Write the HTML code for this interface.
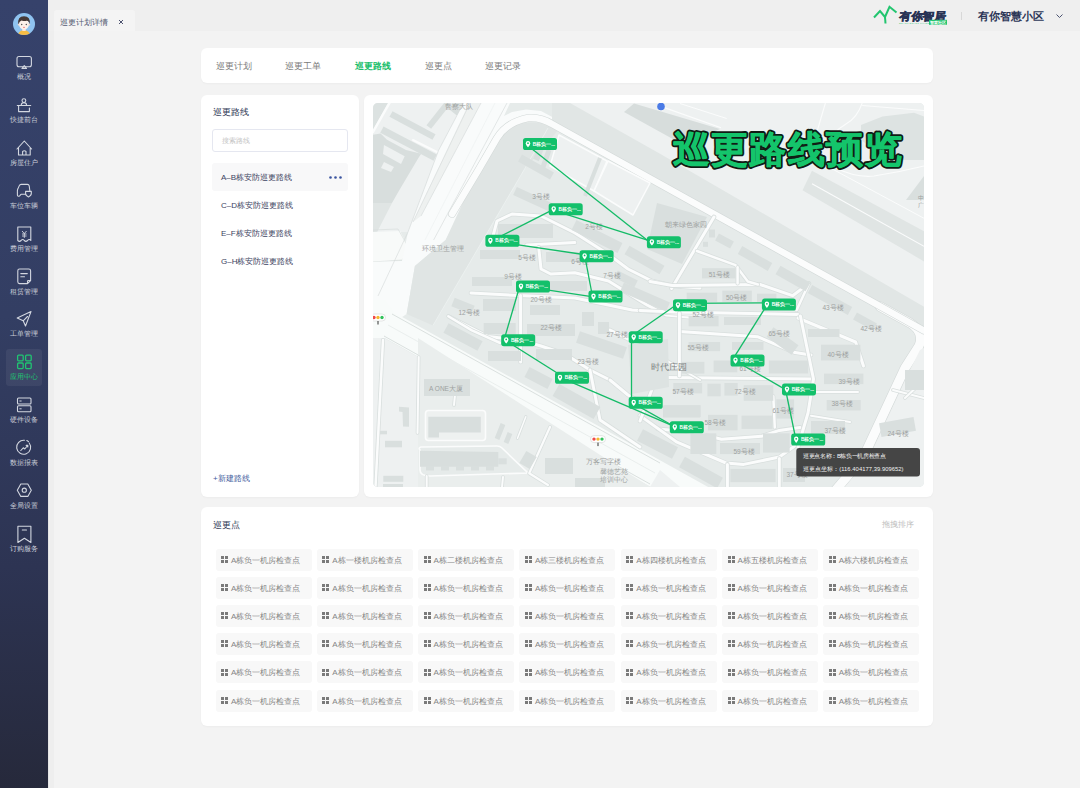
<!DOCTYPE html>
<html><head><meta charset="utf-8">
<style>
*{margin:0;padding:0;box-sizing:border-box}
html,body{width:1080px;height:788px;overflow:hidden}
body{position:relative;background:#f3f3f3;font-family:"Liberation Sans",sans-serif;color:#2c3452}
.a{position:absolute}
.t{position:absolute;white-space:nowrap;line-height:1}
#side{left:0;top:0;width:48px;height:788px;background:linear-gradient(#36426b,#333e63 40%,#2d3453 72%,#26293b)}
#sideshadow{left:48px;top:0;width:6px;height:788px;background:linear-gradient(90deg,#dcdcdc 0,#f2f2f2 1.2px,#eeeeee 2px,#eeeeee 6px)}
.sl{position:absolute;left:0;width:48px;text-align:center;font-size:7px;line-height:8px;color:#c9cdd8}
.ic{position:absolute;left:0;width:48px;height:788px;top:0}
#hdr{left:48px;top:0;width:1032px;height:31px;background:#efefef}
.card{position:absolute;background:#fff;border-radius:6px;box-shadow:0 1px 2px rgba(0,0,0,.03)}
.tab{position:absolute;top:62px;font-size:9px;line-height:9px;color:#7a7a7a}
.li{position:absolute;left:221px;font-size:8px;line-height:8px;color:#3b4260}
.chip{position:absolute;width:96px;height:22px;background:#f8f8f8;border-radius:3px}
.chip i{position:absolute;left:5.5px;top:7.2px;width:7px;height:7px}
.chip i b{position:absolute;width:3px;height:3px;background:#7a7a7a}
.chip span{position:absolute;left:15.5px;top:8px;font-size:8px;line-height:8px;color:#858585;white-space:nowrap}
</style></head><body>

<div id="side" class="a"></div>
<div id="sideshadow" class="a"></div>
<svg class="a" style="left:0;top:0" width="48" height="788" viewBox="0 0 48 788">
<defs><clipPath id="avc"><circle cx="24" cy="24" r="11"/></clipPath></defs>
<circle cx="24" cy="24" r="11" fill="#8fc3f0"/>
<g clip-path="url(#avc)">
<path d="M17.5,37 Q18,30.5 24,30 Q30,30.5 30.5,37 Z" fill="#f7bd45"/>
<rect x="22.3" y="27" width="3.4" height="4" fill="#fbe6da"/>
<ellipse cx="24" cy="24.3" rx="5" ry="5.2" fill="#fdf0ea"/>
<circle cx="18.8" cy="24.6" r="1" fill="#fae3d8"/><circle cx="29.2" cy="24.6" r="1" fill="#fae3d8"/>
<path d="M18.2,24.5 Q17.3,16.3 24,16.3 Q30.7,16.3 29.8,24.5 Q29,20.5 26.5,20.8 Q24.5,21.5 21.5,20.5 Q19.5,21 18.2,24.5 Z" fill="#463936"/>
<circle cx="21.7" cy="24.6" r=".75" fill="#555"/><circle cx="26.3" cy="24.6" r=".75" fill="#555"/>
<ellipse cx="24" cy="27.3" rx="1" ry=".55" fill="#ef6a6a"/>
</g>
<g fill="none" stroke="#d3d7e0" stroke-width="1.1" stroke-linejoin="round" stroke-linecap="round">
<rect x="17" y="56.5" width="14.4" height="10.2" rx="2"/>
<path d="M22,68.4 L26.5,68.4 M22.6,67.6 L24.3,65.6 L26,67.6"/>
<circle cx="23.9" cy="100.6" r="1.9"/>
<path d="M21.2,105 Q21.5,102.6 23.9,102.6 Q26.3,102.6 26.6,105 M17.3,105.5 L30.7,105.5 M18.6,106 L18.6,111.6 L29.4,111.6 L29.4,108"/>
<path d="M17,149 L24.3,141 L31.6,149 M18.5,147.5 L18.5,155 L30.2,155 L30.2,147.5 M22.6,155 L22.6,151.5 Q24.3,150 26,151.5 L26,155"/>
<path d="M25.6,194.3 L21,194.3 L19.6,195.8 Q19.2,196.2 18.4,196.2 Q17.4,196.2 17.4,195 L17.4,191 Q17.4,189.8 18,188.6 L19.3,185.6 Q19.8,184.4 21.2,184.4 L27.5,184.4 Q28.8,184.4 29.2,185.8 L29.9,191.2"/>
<path d="M25.6,191.4 L31.3,191.4 L31.3,193.6 Q31.3,195.8 28.45,196.9 Q25.6,195.8 25.6,193.6 Z"/>
<path d="M17.8,227 L30.8,227 L30.8,240.5 Q29.2,238.6 27.5,240.5 Q25.9,242.2 24.3,240.5 Q22.7,238.6 21.1,240.5 Q19.5,242.2 17.8,240.5 Z"/>
<path d="M22.3,231.3 L24.3,233.5 L26.3,231.3 M22.4,234 L26.2,234 M22.4,236 L26.2,236 M24.3,233.5 L24.3,237.5" stroke-width=".9"/>
<path d="M27.5,283.6 L19.5,283.6 Q17.8,283.6 17.8,281.8 L17.8,270.8 Q17.8,269 19.5,269 L28.8,269 Q30.6,269 30.6,270.8 L30.6,280.5 Z M30.6,280.5 L28.3,280.5 Q27.5,280.5 27.5,281.3 L27.5,283.6"/>
<path d="M20.8,273.6 L27.3,273.6 M20.8,276.8 L24.5,276.8"/>
<path d="M17.2,318 L31,311.6 L25.5,326 L23.2,320.8 Z M23.2,320.8 L27.5,316.5"/>
</g>
<rect x="6" y="349" width="36" height="37" rx="3" fill="#ffffff" fill-opacity=".06"/>
<g fill="none" stroke="#20c572" stroke-width="1.3">
<rect x="17.6" y="355.2" width="5.6" height="5.6" rx="1"/><rect x="25.6" y="355.2" width="5.6" height="5.6" rx="1"/>
<rect x="17.6" y="363" width="5.6" height="5.6" rx="1"/><rect x="25.6" y="363" width="5.6" height="5.6" rx="1"/>
</g>
<g fill="none" stroke="#d3d7e0" stroke-width="1.1" stroke-linejoin="round" stroke-linecap="round">
<rect x="17.5" y="398" width="13.5" height="6" rx="1"/><rect x="17.5" y="405.8" width="13.5" height="6" rx="1"/>
<path d="M19.8,401 L21.2,401 M19.8,408.8 L21.2,408.8" stroke-width="1"/>
<path d="M29.2,443 A7,7 0 1 1 24.5,440.3"/>
<path d="M26.8,440.6 A7,7 0 0 1 28.5,441.6" />
<path d="M20.8,450.5 L23.3,447.8 L24.8,449 L27.6,445.5 M26.2,445.4 L27.8,445.3 L27.8,446.9"/>
<path d="M20.8,484 L27.8,484 L31.3,490.2 L27.8,496.4 L20.8,496.4 L17.3,490.2 Z"/>
<circle cx="24.3" cy="490.2" r="2.1"/>
<path d="M17.9,526.2 L30.9,526.2 L30.9,542.5 L24.4,538.2 L17.9,542.5 Z M22.3,530 L26.5,530"/>
</g>
</svg>
<div class="sl" style="top:73px">概况</div>
<div class="sl" style="top:116px">快捷前台</div>
<div class="sl" style="top:159px">房屋住户</div>
<div class="sl" style="top:202px">车位车辆</div>
<div class="sl" style="top:244.5px">费用管理</div>
<div class="sl" style="top:287.5px">租赁管理</div>
<div class="sl" style="top:330px">工单管理</div>
<div class="sl" style="top:373px;color:#20c572">应用中心</div>
<div class="sl" style="top:416px">硬件设备</div>
<div class="sl" style="top:459px">数据报表</div>
<div class="sl" style="top:501.5px">全局设置</div>
<div class="sl" style="top:544.5px">订购服务</div>


<div id="hdr" class="a"></div>
<div class="a" style="left:54px;top:10px;width:81px;height:21px;background:#f4f4f4;border-radius:3px 3px 0 0"></div>
<div class="t" style="left:60px;top:18.5px;font-size:8px;color:#535a72">巡更计划详情</div>
<svg class="a" style="left:117.5px;top:19px" width="6" height="6"><path d="M1,1 L5,5 M5,1 L1,5" stroke="#3a4060" stroke-width=".9"/></svg>
<svg class="a" style="left:870px;top:4px" width="80" height="24" viewBox="870 4 80 24">
<path d="M874,17.5 L880,11 L885,17 L889.5,6.8 L896.5,12.5" fill="none" stroke="#22c56f" stroke-width="2" stroke-linejoin="miter"/>
<path d="M885,17 L885.5,23.5" fill="none" stroke="#22c56f" stroke-width="2"/>
<text x="0" y="0" font-size="10.9" font-weight="900" fill="#283355" stroke="#283355" stroke-width=".55" transform="translate(899,19.9) skewX(-7)" textLength="46.5" lengthAdjust="spacingAndGlyphs">有你智居</text>
<rect x="929" y="19.8" width="18" height="5" fill="#22c56f"/>
<text x="938" y="22.5" font-size="3.6" font-weight="bold" fill="#fff" text-anchor="middle" dominant-baseline="central">智慧社区</text>
<text x="899" y="22.5" font-size="2.2" fill="#22c56f" dominant-baseline="central" letter-spacing=".4">SMART SMART LIVING</text>
</svg>
<div class="a" style="left:961px;top:12px;width:1px;height:8px;background:#d8d8d8"></div>
<div class="t" style="left:977.5px;top:10.5px;font-size:11px;font-weight:bold;color:#2c3657">有你智慧小区</div>
<svg class="a" style="left:1055px;top:13px" width="9" height="6"><path d="M1.5,1.5 L4.5,4.5 L7.5,1.5" fill="none" stroke="#4a5270" stroke-width="1"/></svg>


<!-- cards -->
<div class="card" style="left:201px;top:48px;width:732px;height:35px"></div>
<div class="card" style="left:201px;top:94.5px;width:158px;height:402px"></div>
<div class="card" style="left:364px;top:94.5px;width:569px;height:402px"></div>
<div class="card" style="left:201px;top:506.5px;width:732px;height:219.5px"></div>

<div class="tab" style="left:215.5px">巡更计划</div>
<div class="tab" style="left:285px">巡更工单</div>
<div class="tab" style="left:354.5px;color:#1abe6b;font-weight:bold">巡更路线</div>
<div class="tab" style="left:424.5px">巡更点</div>
<div class="tab" style="left:485px">巡更记录</div>

<div class="t" style="left:212.5px;top:107.5px;font-size:9px;font-weight:500;color:#2c3452">巡更路线</div>
<div class="a" style="left:212px;top:129px;width:136px;height:23px;border:1px solid #e5e7f0;border-radius:3px"></div>
<div class="t" style="left:221.5px;top:137px;font-size:7px;color:#c3c3c3">搜索路线</div>
<div class="a" style="left:212px;top:163px;width:136px;height:28px;background:#f8f8f9;border-radius:3px"></div>
<div class="li" style="top:173.5px">A–B栋安防巡更路线</div>
<div class="t" style="left:329px;top:175.5px;width:14px;height:3px">
 <svg width="14" height="3" style="position:absolute;left:0;top:0"><circle cx="1.5" cy="1.5" r="1.3" fill="#3b55a0"/><circle cx="6.5" cy="1.5" r="1.3" fill="#3b55a0"/><circle cx="11.5" cy="1.5" r="1.3" fill="#3b55a0"/></svg>
</div>
<div class="li" style="top:201.5px">C–D栋安防巡更路线</div>
<div class="li" style="top:229.5px">E–F栋安防巡更路线</div>
<div class="li" style="top:257.5px">G–H栋安防巡更路线</div>
<div class="t" style="left:213px;top:475px;font-size:8px;color:#3d5a9c">+新建路线</div>

<div class="t" style="left:212.5px;top:520.5px;font-size:9px;font-weight:500;color:#2c3452">巡更点</div>
<div class="t" style="left:881.5px;top:520.5px;font-size:7.5px;color:#bdbdbd">拖拽排序</div>

<div class="chip" style="left:215.5px;top:549.0px"><i><b style="left:0;top:0"></b><b style="left:4px;top:0"></b><b style="left:0;top:4px"></b><b style="left:4px;top:4px"></b></i><span>A栋负一机房检查点</span></div>
<div class="chip" style="left:316.8px;top:549.0px"><i><b style="left:0;top:0"></b><b style="left:4px;top:0"></b><b style="left:0;top:4px"></b><b style="left:4px;top:4px"></b></i><span>A栋一楼机房检查点</span></div>
<div class="chip" style="left:418.1px;top:549.0px"><i><b style="left:0;top:0"></b><b style="left:4px;top:0"></b><b style="left:0;top:4px"></b><b style="left:4px;top:4px"></b></i><span>A栋二楼机房检查点</span></div>
<div class="chip" style="left:519.4px;top:549.0px"><i><b style="left:0;top:0"></b><b style="left:4px;top:0"></b><b style="left:0;top:4px"></b><b style="left:4px;top:4px"></b></i><span>A栋三楼机房检查点</span></div>
<div class="chip" style="left:620.7px;top:549.0px"><i><b style="left:0;top:0"></b><b style="left:4px;top:0"></b><b style="left:0;top:4px"></b><b style="left:4px;top:4px"></b></i><span>A栋四楼机房检查点</span></div>
<div class="chip" style="left:722.0px;top:549.0px"><i><b style="left:0;top:0"></b><b style="left:4px;top:0"></b><b style="left:0;top:4px"></b><b style="left:4px;top:4px"></b></i><span>A栋五楼机房检查点</span></div>
<div class="chip" style="left:823.3px;top:549.0px"><i><b style="left:0;top:0"></b><b style="left:4px;top:0"></b><b style="left:0;top:4px"></b><b style="left:4px;top:4px"></b></i><span>A栋六楼机房检查点</span></div>
<div class="chip" style="left:215.5px;top:577.1px"><i><b style="left:0;top:0"></b><b style="left:4px;top:0"></b><b style="left:0;top:4px"></b><b style="left:4px;top:4px"></b></i><span>A栋负一机房检查点</span></div>
<div class="chip" style="left:316.8px;top:577.1px"><i><b style="left:0;top:0"></b><b style="left:4px;top:0"></b><b style="left:0;top:4px"></b><b style="left:4px;top:4px"></b></i><span>A栋负一机房检查点</span></div>
<div class="chip" style="left:418.1px;top:577.1px"><i><b style="left:0;top:0"></b><b style="left:4px;top:0"></b><b style="left:0;top:4px"></b><b style="left:4px;top:4px"></b></i><span>A栋负一机房检查点</span></div>
<div class="chip" style="left:519.4px;top:577.1px"><i><b style="left:0;top:0"></b><b style="left:4px;top:0"></b><b style="left:0;top:4px"></b><b style="left:4px;top:4px"></b></i><span>A栋负一机房检查点</span></div>
<div class="chip" style="left:620.7px;top:577.1px"><i><b style="left:0;top:0"></b><b style="left:4px;top:0"></b><b style="left:0;top:4px"></b><b style="left:4px;top:4px"></b></i><span>A栋负一机房检查点</span></div>
<div class="chip" style="left:722.0px;top:577.1px"><i><b style="left:0;top:0"></b><b style="left:4px;top:0"></b><b style="left:0;top:4px"></b><b style="left:4px;top:4px"></b></i><span>A栋负一机房检查点</span></div>
<div class="chip" style="left:823.3px;top:577.1px"><i><b style="left:0;top:0"></b><b style="left:4px;top:0"></b><b style="left:0;top:4px"></b><b style="left:4px;top:4px"></b></i><span>A栋负一机房检查点</span></div>
<div class="chip" style="left:215.5px;top:605.2px"><i><b style="left:0;top:0"></b><b style="left:4px;top:0"></b><b style="left:0;top:4px"></b><b style="left:4px;top:4px"></b></i><span>A栋负一机房检查点</span></div>
<div class="chip" style="left:316.8px;top:605.2px"><i><b style="left:0;top:0"></b><b style="left:4px;top:0"></b><b style="left:0;top:4px"></b><b style="left:4px;top:4px"></b></i><span>A栋负一机房检查点</span></div>
<div class="chip" style="left:418.1px;top:605.2px"><i><b style="left:0;top:0"></b><b style="left:4px;top:0"></b><b style="left:0;top:4px"></b><b style="left:4px;top:4px"></b></i><span>A栋负一机房检查点</span></div>
<div class="chip" style="left:519.4px;top:605.2px"><i><b style="left:0;top:0"></b><b style="left:4px;top:0"></b><b style="left:0;top:4px"></b><b style="left:4px;top:4px"></b></i><span>A栋负一机房检查点</span></div>
<div class="chip" style="left:620.7px;top:605.2px"><i><b style="left:0;top:0"></b><b style="left:4px;top:0"></b><b style="left:0;top:4px"></b><b style="left:4px;top:4px"></b></i><span>A栋负一机房检查点</span></div>
<div class="chip" style="left:722.0px;top:605.2px"><i><b style="left:0;top:0"></b><b style="left:4px;top:0"></b><b style="left:0;top:4px"></b><b style="left:4px;top:4px"></b></i><span>A栋负一机房检查点</span></div>
<div class="chip" style="left:823.3px;top:605.2px"><i><b style="left:0;top:0"></b><b style="left:4px;top:0"></b><b style="left:0;top:4px"></b><b style="left:4px;top:4px"></b></i><span>A栋负一机房检查点</span></div>
<div class="chip" style="left:215.5px;top:633.3px"><i><b style="left:0;top:0"></b><b style="left:4px;top:0"></b><b style="left:0;top:4px"></b><b style="left:4px;top:4px"></b></i><span>A栋负一机房检查点</span></div>
<div class="chip" style="left:316.8px;top:633.3px"><i><b style="left:0;top:0"></b><b style="left:4px;top:0"></b><b style="left:0;top:4px"></b><b style="left:4px;top:4px"></b></i><span>A栋负一机房检查点</span></div>
<div class="chip" style="left:418.1px;top:633.3px"><i><b style="left:0;top:0"></b><b style="left:4px;top:0"></b><b style="left:0;top:4px"></b><b style="left:4px;top:4px"></b></i><span>A栋负一机房检查点</span></div>
<div class="chip" style="left:519.4px;top:633.3px"><i><b style="left:0;top:0"></b><b style="left:4px;top:0"></b><b style="left:0;top:4px"></b><b style="left:4px;top:4px"></b></i><span>A栋负一机房检查点</span></div>
<div class="chip" style="left:620.7px;top:633.3px"><i><b style="left:0;top:0"></b><b style="left:4px;top:0"></b><b style="left:0;top:4px"></b><b style="left:4px;top:4px"></b></i><span>A栋负一机房检查点</span></div>
<div class="chip" style="left:722.0px;top:633.3px"><i><b style="left:0;top:0"></b><b style="left:4px;top:0"></b><b style="left:0;top:4px"></b><b style="left:4px;top:4px"></b></i><span>A栋负一机房检查点</span></div>
<div class="chip" style="left:823.3px;top:633.3px"><i><b style="left:0;top:0"></b><b style="left:4px;top:0"></b><b style="left:0;top:4px"></b><b style="left:4px;top:4px"></b></i><span>A栋负一机房检查点</span></div>
<div class="chip" style="left:215.5px;top:661.4px"><i><b style="left:0;top:0"></b><b style="left:4px;top:0"></b><b style="left:0;top:4px"></b><b style="left:4px;top:4px"></b></i><span>A栋负一机房检查点</span></div>
<div class="chip" style="left:316.8px;top:661.4px"><i><b style="left:0;top:0"></b><b style="left:4px;top:0"></b><b style="left:0;top:4px"></b><b style="left:4px;top:4px"></b></i><span>A栋负一机房检查点</span></div>
<div class="chip" style="left:418.1px;top:661.4px"><i><b style="left:0;top:0"></b><b style="left:4px;top:0"></b><b style="left:0;top:4px"></b><b style="left:4px;top:4px"></b></i><span>A栋负一机房检查点</span></div>
<div class="chip" style="left:519.4px;top:661.4px"><i><b style="left:0;top:0"></b><b style="left:4px;top:0"></b><b style="left:0;top:4px"></b><b style="left:4px;top:4px"></b></i><span>A栋负一机房检查点</span></div>
<div class="chip" style="left:620.7px;top:661.4px"><i><b style="left:0;top:0"></b><b style="left:4px;top:0"></b><b style="left:0;top:4px"></b><b style="left:4px;top:4px"></b></i><span>A栋负一机房检查点</span></div>
<div class="chip" style="left:722.0px;top:661.4px"><i><b style="left:0;top:0"></b><b style="left:4px;top:0"></b><b style="left:0;top:4px"></b><b style="left:4px;top:4px"></b></i><span>A栋负一机房检查点</span></div>
<div class="chip" style="left:823.3px;top:661.4px"><i><b style="left:0;top:0"></b><b style="left:4px;top:0"></b><b style="left:0;top:4px"></b><b style="left:4px;top:4px"></b></i><span>A栋负一机房检查点</span></div>
<div class="chip" style="left:215.5px;top:689.5px"><i><b style="left:0;top:0"></b><b style="left:4px;top:0"></b><b style="left:0;top:4px"></b><b style="left:4px;top:4px"></b></i><span>A栋负一机房检查点</span></div>
<div class="chip" style="left:316.8px;top:689.5px"><i><b style="left:0;top:0"></b><b style="left:4px;top:0"></b><b style="left:0;top:4px"></b><b style="left:4px;top:4px"></b></i><span>A栋负一机房检查点</span></div>
<div class="chip" style="left:418.1px;top:689.5px"><i><b style="left:0;top:0"></b><b style="left:4px;top:0"></b><b style="left:0;top:4px"></b><b style="left:4px;top:4px"></b></i><span>A栋负一机房检查点</span></div>
<div class="chip" style="left:519.4px;top:689.5px"><i><b style="left:0;top:0"></b><b style="left:4px;top:0"></b><b style="left:0;top:4px"></b><b style="left:4px;top:4px"></b></i><span>A栋负一机房检查点</span></div>
<div class="chip" style="left:620.7px;top:689.5px"><i><b style="left:0;top:0"></b><b style="left:4px;top:0"></b><b style="left:0;top:4px"></b><b style="left:4px;top:4px"></b></i><span>A栋负一机房检查点</span></div>
<div class="chip" style="left:722.0px;top:689.5px"><i><b style="left:0;top:0"></b><b style="left:4px;top:0"></b><b style="left:0;top:4px"></b><b style="left:4px;top:4px"></b></i><span>A栋负一机房检查点</span></div>
<div class="chip" style="left:823.3px;top:689.5px"><i><b style="left:0;top:0"></b><b style="left:4px;top:0"></b><b style="left:0;top:4px"></b><b style="left:4px;top:4px"></b></i><span>A栋负一机房检查点</span></div>

<!-- MAP -->
<div class="a" id="map" style="left:373px;top:103px;width:551px;height:384px;border-radius:5px;overflow:hidden;background:#e9eded">
<svg width="551" height="384" viewBox="373 103 551 384" style="display:block;font-family:'Liberation Sans',sans-serif">
<rect x="373" y="103" width="551" height="384" fill="#e6ebea"/>
<polygon points="373,103 463.5,103 438.5,150.5 408,232 373,232" fill="#eef1f1"/>
<polygon points="373,103 388,103 373,130" fill="#dce2e1"/>
<path d="M389.5,103 L373,132" fill="none" stroke="#fbfcfc" stroke-width="2.5" stroke-linecap="round" stroke-linejoin="round"/>
<path d="M391,114 L434,137" stroke="#d9dfde" stroke-width="6.5"/>
<path d="M428.8,127 L447.9,103" stroke="#d9dfde" stroke-width="6"/>
<path d="M381.9,129.6 L435.2,157.6" stroke="#d9dfde" stroke-width="7"/>
<polygon points="373,134.7 380.6,133.5 387,139.8 406,150 421.2,153.8 418.7,157.6 398.4,191.8 392,203 373,203" fill="#d8dedd"/>
<polygon points="384,145 404.7,156.3 401,164 383,154" fill="#eef1f1"/>
<polygon points="384,162 394,167 391,172 381,168" fill="#eef1f1"/>
<polygon points="452,103 466,103 460,118 450,110" fill="#d8dedd"/>
<path d="M413,140 L437,152" fill="none" stroke="#fbfcfc" stroke-width="2" stroke-linecap="round" stroke-linejoin="round"/>
<polygon points="373,203 392,203 373,240" fill="#e0e5e4"/>
<polygon points="373,232 400,231 408,246 402,260 373,262" fill="#f8faf9"/>
<path d="M373,230 L398,229 L407,245" fill="none" stroke="#d5dbda" stroke-width="0.6"/>
<path d="M373,262 L402,260" fill="none" stroke="#d5dbda" stroke-width="0.6"/>
<polygon points="373,262 402,261 385,290 373,296" fill="#eef1f1"/>
<polygon points="463.5,103 510,103 504,116 512,112 526,109.5 541,111 556,119 548,128 532,120 520,122 503.3,137 484.8,170 445.6,240 414.9,266 406.6,314 395,322 373,326 373,262 402,261 408,232 438.5,150.5" fill="#f9fbfb"/>
<polygon points="469,103 481,103 421,216 413,222" fill="#eef1f0"/>
<path d="M463.5,103 L438.5,150.5 L408,232 L378,296" fill="none" stroke="#d3d9d8" stroke-width="0.6"/>
<path d="M470,103 L413,222" fill="none" stroke="#d3d9d8" stroke-width="0.6"/>
<path d="M481,103 L421,216" fill="none" stroke="#d3d9d8" stroke-width="0.6"/>
<path d="M507,103 L433.6,240" fill="none" stroke="#d3d9d8" stroke-width="0.6"/>
<path d="M495,103 L425,240" fill="none" stroke="#e6ebea" stroke-width="0.4"/>
<polygon points="552,122 560,128 524,170 433,325.4 406.6,314 414.9,266 445.6,240 478,170 497,136 509,123" fill="#e0e5e4"/>
<path d="M548,128 L524,170 L433,325.4" fill="none" stroke="#eef2f1" stroke-width="0.8"/>
<polygon points="552,103 924,103 924,330 552,122" fill="#eef1f1"/>
<polygon points="552,103 570,103 660,153.7 924,306.7 924,331 552,122" fill="#e1e6e5"/>
<polygon points="624,112 634,103.5 720,129 690,142 680,143" fill="#d7dddc"/>
<path d="M663.7,107.4 L721,127.8" fill="none" stroke="#fbfcfc" stroke-width="1.2"/>
<path d="M680,103.5 L726.7,118.5" fill="none" stroke="#fbfcfc" stroke-width="1.0"/>
<polygon points="812,170.8 924,231.2 924,261.4 802.5,190.2" fill="#e0e5e4"/>
<path d="M812,183.7 L924,246.3" fill="none" stroke="#fbfcfc" stroke-width="1.1"/>
<path d="M831.6,168.6 L924,218.3" fill="none" stroke="#fbfcfc" stroke-width="1.0"/>
<polygon points="861,125 882.5,116.5 914,112.7 924,116.5 924,160 901,160 875,150 861,140" fill="#dde3e2"/>
<path d="M825.4,103 L816,135" fill="none" stroke="#fbfcfc" stroke-width="1.1"/>
<path d="M862.2,103 Q857,118 846,124 Q832,132 820,150" fill="none" stroke="#fbfcfc" stroke-width="1.1"/>
<path d="M862.2,105.5 L924,110.5" fill="none" stroke="#fbfcfc" stroke-width="1.1"/>
<path d="M836,168 Q856,178 874,176 Q900,172 924,166" fill="none" stroke="#fbfcfc" stroke-width="1.1"/>
<polygon points="906,200 924,176 924,200" fill="#d9dfde"/>
<path d="M880,306.5 L910,323 Q925,332 919,346 L905,368 L863,458 L834,492" fill="none" stroke="#d3d9d8" stroke-width="10.2" stroke-linecap="round" stroke-linejoin="round"/>
<path d="M880,306.5 L910,323 Q925,332 919,346 L905,368 L863,458 L834,492" fill="none" stroke="#fbfcfc" stroke-width="9" stroke-linecap="round" stroke-linejoin="round"/>
<path d="M452,214 L478.4,170 L497,138 Q507,122 528,118 Q541,117 552,124 L924,330.6" fill="none" stroke="#d3d9d8" stroke-width="7.7" stroke-linecap="round" stroke-linejoin="round"/>
<path d="M452,214 L478.4,170 L497,138 Q507,122 528,118 Q541,117 552,124 L924,330.6" fill="none" stroke="#fbfcfc" stroke-width="6.5" stroke-linecap="round" stroke-linejoin="round"/>
<polygon points="373,300 385,300 395,313 924,607 924,640 385,338 373,338" fill="#f8fbfa"/>
<path d="M392,314 L660,463" fill="none" stroke="#cdd4d3" stroke-width="0.7"/>
<path d="M384,336 L650,484" fill="none" stroke="#cdd4d3" stroke-width="0.7"/>
<path d="M388,325 L655,473" fill="none" stroke="#e6ebea" stroke-width="0.8"/>
<polygon points="373,338 384,338 650,487 373,487" fill="#eef1f1"/>
<path d="M383,340 L375.5,487" fill="none" stroke="#d9dfde" stroke-width="4.1" stroke-linecap="round" stroke-linejoin="round"/>
<path d="M383,340 L375.5,487" fill="none" stroke="#fbfcfc" stroke-width="2.5" stroke-linecap="round" stroke-linejoin="round"/>
<polygon points="418,338 650,487 418,487" fill="#eaeeed"/>
<path d="M418.7,357 L417.5,433" fill="none" stroke="#d9dfde" stroke-width="3.6" stroke-linecap="round" stroke-linejoin="round"/>
<path d="M418.7,357 L417.5,433" fill="none" stroke="#fbfcfc" stroke-width="2" stroke-linecap="round" stroke-linejoin="round"/>
<rect x="425.5" y="410.5" width="60" height="30" rx="3" fill="#eef1f0" stroke="#fbfcfc" stroke-width="1.6"/>
<path d="M420,450 Q418,448 421,447 L497,446 Q500,446 502,448 L528,473 L430,476 Q420,476 420,470 Z" fill="#e6ebea" stroke="#fbfcfc" stroke-width="1.6"/>
<path d="M426.7,476 L426.7,487" fill="none" stroke="#d9dfde" stroke-width="3.6" stroke-linecap="round" stroke-linejoin="round"/>
<path d="M426.7,476 L426.7,487" fill="none" stroke="#fbfcfc" stroke-width="2" stroke-linecap="round" stroke-linejoin="round"/>
<path d="M503,477 L502,487" fill="none" stroke="#d9dfde" stroke-width="3.6" stroke-linecap="round" stroke-linejoin="round"/>
<path d="M503,477 L502,487" fill="none" stroke="#fbfcfc" stroke-width="2" stroke-linecap="round" stroke-linejoin="round"/>
<path d="M455,395 L454,405" fill="none" stroke="#d9dfde" stroke-width="3.6" stroke-linecap="round" stroke-linejoin="round"/>
<path d="M455,395 L454,405" fill="none" stroke="#fbfcfc" stroke-width="2" stroke-linecap="round" stroke-linejoin="round"/>
<path d="M525.8,416.7 L517.5,438.3" fill="none" stroke="#d9dfde" stroke-width="3.1" stroke-linecap="round" stroke-linejoin="round"/>
<path d="M525.8,416.7 L517.5,438.3" fill="none" stroke="#fbfcfc" stroke-width="1.5" stroke-linecap="round" stroke-linejoin="round"/>
<path d="M550,427 L529.2,473.3 L548,485" fill="none" stroke="#d9dfde" stroke-width="3.8000000000000003" stroke-linecap="round" stroke-linejoin="round"/>
<path d="M550,427 L529.2,473.3 L548,485" fill="none" stroke="#fbfcfc" stroke-width="2.2" stroke-linecap="round" stroke-linejoin="round"/>
<rect x="424" y="379" width="46" height="17" fill="#d9dfde"/>
<path d="M428.3,416.7 L480.8,416.7 L480.8,432.5 L439,432.5 L439,437.5 L428.3,437.5 Z" fill="#d8dedd"/>
<path d="M420,450.8 L498.3,452 L498.3,466.7 L420,466.7 Z" fill="#d8dedd"/>
<rect x="426" y="466" width="8" height="4.5" fill="#d9dfde"/>
<rect x="441" y="466" width="8" height="4.5" fill="#d9dfde"/>
<rect x="456" y="466" width="8" height="4.5" fill="#d9dfde"/>
<rect x="471" y="466" width="8" height="4.5" fill="#d9dfde"/>
<rect x="486" y="466" width="8" height="4.5" fill="#d9dfde"/>
<rect x="498.3" y="458.3" width="8.4" height="6" fill="#d9dfde"/>
<polygon points="399,406.7 409,407.5 409,426.7 403,426.5 402.5,412 399,411.5" fill="#d9dfde"/>
<rect x="380" y="430.8" width="7" height="3.5" fill="#d9dfde"/>
<rect x="385" y="440.8" width="17" height="6.5" fill="#d9dfde"/>
<rect x="383.3" y="475.8" width="20" height="6" fill="#d9dfde"/>
<rect x="383" y="484" width="20" height="3" fill="#d9dfde"/>
<rect x="522" y="453" width="12" height="14" fill="#d9dfde" transform="rotate(30 528.0 460.0)"/>
<path d="M503,424 L497,439" stroke="#d9dfde" stroke-width="5"/>
<path d="M510,433 L506,443" stroke="#d9dfde" stroke-width="5"/>
<rect x="545" y="458" width="28" height="16" fill="#d9dfde"/>
<rect x="575" y="478" width="30" height="9" fill="#d9dfde"/>
<polygon points="650,487 680,487 660,470" fill="#eef1f1"/>
<polygon points="924,348 924,487 845,487 869,458 911,368 920,350" fill="#eef1f1"/>
<rect x="880" y="420" width="35" height="14" fill="#d9dfde" transform="rotate(-10 897.5 427.0)"/>
<path d="M893,390 L924,398" fill="none" stroke="#d9dfde" stroke-width="3.6" stroke-linecap="round" stroke-linejoin="round"/>
<path d="M893,390 L924,398" fill="none" stroke="#fbfcfc" stroke-width="2" stroke-linecap="round" stroke-linejoin="round"/>
<path d="M905,398 L924,380" fill="none" stroke="#d9dfde" stroke-width="3.6" stroke-linecap="round" stroke-linejoin="round"/>
<path d="M905,398 L924,380" fill="none" stroke="#fbfcfc" stroke-width="2" stroke-linecap="round" stroke-linejoin="round"/>
<rect x="905" y="370" width="19" height="20" fill="#d9dfde"/>
<polygon points="559,135 607,161 594,191 550,166" fill="#eef1f1" stroke="#fbfcfc" stroke-width="1.5" stroke-linejoin="round"/>
<polygon points="608,161 650,183 633,215 594,191" fill="#eef1f1" stroke="#fbfcfc" stroke-width="1.5" stroke-linejoin="round"/>
<polygon points="657,203 707,217 682,264 647,249" fill="#d9dfde"/>
<path d="M714,217 L671.6,288.4" fill="none" stroke="#d9dfde" stroke-width="4.6" stroke-linecap="round" stroke-linejoin="round"/>
<path d="M714,217 L671.6,288.4" fill="none" stroke="#fbfcfc" stroke-width="3" stroke-linecap="round" stroke-linejoin="round"/>
<path d="M543,143 L536,160" stroke="#d9dfde" stroke-width="6"/>
<path d="M549,150 L542,170" stroke="#d9dfde" stroke-width="5"/>
<path d="M600,158 L585,196" stroke="#d9dfde" stroke-width="4"/>
<path d="M520,158 L552,176" stroke="#d9dfde" stroke-width="8"/>
<path d="M493,236 L497,221 L512,214 L541,216 L575,233 L608,254 L628,269 L652,281 L674,286 L700,288" fill="none" stroke="#d9dfde" stroke-width="4.6" stroke-linecap="round" stroke-linejoin="round"/>
<path d="M493,236 L497,221 L512,214 L541,216 L575,233 L608,254 L628,269 L652,281 L674,286 L700,288" fill="none" stroke="#fbfcfc" stroke-width="3" stroke-linecap="round" stroke-linejoin="round"/>
<path d="M526.7,245 L574.8,242.6" fill="none" stroke="#d9dfde" stroke-width="4.6" stroke-linecap="round" stroke-linejoin="round"/>
<path d="M526.7,245 L574.8,242.6" fill="none" stroke="#fbfcfc" stroke-width="3" stroke-linecap="round" stroke-linejoin="round"/>
<path d="M538.7,247.4 L541,269 L550.7,274 L574.8,272.7 L608.5,281 L647,305 L666,315 L700,318" fill="none" stroke="#d9dfde" stroke-width="4.6" stroke-linecap="round" stroke-linejoin="round"/>
<path d="M538.7,247.4 L541,269 L550.7,274 L574.8,272.7 L608.5,281 L647,305 L666,315 L700,318" fill="none" stroke="#fbfcfc" stroke-width="3" stroke-linecap="round" stroke-linejoin="round"/>
<path d="M471,293 L519,295.6 L575,298 L632,310 L700,315" fill="none" stroke="#d9dfde" stroke-width="4.6" stroke-linecap="round" stroke-linejoin="round"/>
<path d="M471,293 L519,295.6 L575,298 L632,310 L700,315" fill="none" stroke="#fbfcfc" stroke-width="3" stroke-linecap="round" stroke-linejoin="round"/>
<path d="M520.6,295.6 L520.6,362" fill="none" stroke="#d9dfde" stroke-width="4.6" stroke-linecap="round" stroke-linejoin="round"/>
<path d="M520.6,295.6 L520.6,362" fill="none" stroke="#fbfcfc" stroke-width="3" stroke-linecap="round" stroke-linejoin="round"/>
<path d="M449.6,317 L488,336.5 L520,340 L541,346 L565,354 L590,370 L610,380" fill="none" stroke="#d9dfde" stroke-width="4.6" stroke-linecap="round" stroke-linejoin="round"/>
<path d="M449.6,317 L488,336.5 L520,340 L541,346 L565,354 L590,370 L610,380" fill="none" stroke="#fbfcfc" stroke-width="3" stroke-linecap="round" stroke-linejoin="round"/>
<path d="M610,380 L628,395 L646,405" fill="none" stroke="#d9dfde" stroke-width="4.6" stroke-linecap="round" stroke-linejoin="round"/>
<path d="M610,380 L628,395 L646,405" fill="none" stroke="#fbfcfc" stroke-width="3" stroke-linecap="round" stroke-linejoin="round"/>
<path d="M657.8,428.9 L691.9,431.9 L721.5,439.3 L761.5,436.3 L779.3,430.4 L800,427.4" fill="none" stroke="#d9dfde" stroke-width="4.6" stroke-linecap="round" stroke-linejoin="round"/>
<path d="M657.8,428.9 L691.9,431.9 L721.5,439.3 L761.5,436.3 L779.3,430.4 L800,427.4" fill="none" stroke="#fbfcfc" stroke-width="3" stroke-linecap="round" stroke-linejoin="round"/>
<path d="M640,415.6 L677,442.2 L726,463 L743.7,464.4 L779.3,457 L800,442.2" fill="none" stroke="#d9dfde" stroke-width="4.6" stroke-linecap="round" stroke-linejoin="round"/>
<path d="M640,415.6 L677,442.2 L726,463 L743.7,464.4 L779.3,457 L800,442.2" fill="none" stroke="#fbfcfc" stroke-width="3" stroke-linecap="round" stroke-linejoin="round"/>
<path d="M727.4,464.4 L727.4,488" fill="none" stroke="#d9dfde" stroke-width="4.6" stroke-linecap="round" stroke-linejoin="round"/>
<path d="M727.4,464.4 L727.4,488" fill="none" stroke="#fbfcfc" stroke-width="3" stroke-linecap="round" stroke-linejoin="round"/>
<path d="M779.3,458.5 L779.3,488" fill="none" stroke="#d9dfde" stroke-width="4.6" stroke-linecap="round" stroke-linejoin="round"/>
<path d="M779.3,458.5 L779.3,488" fill="none" stroke="#fbfcfc" stroke-width="3" stroke-linecap="round" stroke-linejoin="round"/>
<path d="M773.3,396.3 L774.8,427.4" fill="none" stroke="#d9dfde" stroke-width="4.1" stroke-linecap="round" stroke-linejoin="round"/>
<path d="M773.3,396.3 L774.8,427.4" fill="none" stroke="#fbfcfc" stroke-width="2.5" stroke-linecap="round" stroke-linejoin="round"/>
<path d="M640,310.5 L674,312 L798,314.5" fill="none" stroke="#d9dfde" stroke-width="4.6" stroke-linecap="round" stroke-linejoin="round"/>
<path d="M640,310.5 L674,312 L798,314.5" fill="none" stroke="#fbfcfc" stroke-width="3" stroke-linecap="round" stroke-linejoin="round"/>
<path d="M798,318 L855.6,342 L863.5,366" fill="none" stroke="#d9dfde" stroke-width="4.6" stroke-linecap="round" stroke-linejoin="round"/>
<path d="M798,318 L855.6,342 L863.5,366" fill="none" stroke="#fbfcfc" stroke-width="3" stroke-linecap="round" stroke-linejoin="round"/>
<path d="M679.4,331.6 L758,336.8 L795,352.6 L811,355" fill="none" stroke="#d9dfde" stroke-width="4.6" stroke-linecap="round" stroke-linejoin="round"/>
<path d="M679.4,331.6 L758,336.8 L795,352.6 L811,355" fill="none" stroke="#fbfcfc" stroke-width="3" stroke-linecap="round" stroke-linejoin="round"/>
<path d="M640,377 L666,377.6 L813.5,379" fill="none" stroke="#d9dfde" stroke-width="4.6" stroke-linecap="round" stroke-linejoin="round"/>
<path d="M640,377 L666,377.6 L813.5,379" fill="none" stroke="#fbfcfc" stroke-width="3" stroke-linecap="round" stroke-linejoin="round"/>
<path d="M679.4,313 L679.4,376" fill="none" stroke="#d9dfde" stroke-width="4.6" stroke-linecap="round" stroke-linejoin="round"/>
<path d="M679.4,313 L679.4,376" fill="none" stroke="#fbfcfc" stroke-width="3" stroke-linecap="round" stroke-linejoin="round"/>
<path d="M800.4,316 L813.5,379 L808,413 L798,447" fill="none" stroke="#d9dfde" stroke-width="4.6" stroke-linecap="round" stroke-linejoin="round"/>
<path d="M800.4,316 L813.5,379 L808,413 L798,447" fill="none" stroke="#fbfcfc" stroke-width="3" stroke-linecap="round" stroke-linejoin="round"/>
<path d="M816,392 L858,392" fill="none" stroke="#d9dfde" stroke-width="3.6" stroke-linecap="round" stroke-linejoin="round"/>
<path d="M816,392 L858,392" fill="none" stroke="#fbfcfc" stroke-width="2" stroke-linecap="round" stroke-linejoin="round"/>
<path d="M811,415.7 L850,422" fill="none" stroke="#d9dfde" stroke-width="3.6" stroke-linecap="round" stroke-linejoin="round"/>
<path d="M811,415.7 L850,422" fill="none" stroke="#fbfcfc" stroke-width="2" stroke-linecap="round" stroke-linejoin="round"/>
<path d="M650,281.5 L672.4,285.6 L760,284.5 L792.6,295.7 L808.9,283.5" fill="none" stroke="#d9dfde" stroke-width="4.6" stroke-linecap="round" stroke-linejoin="round"/>
<path d="M650,281.5 L672.4,285.6 L760,284.5 L792.6,295.7 L808.9,283.5" fill="none" stroke="#fbfcfc" stroke-width="3" stroke-linecap="round" stroke-linejoin="round"/>
<path d="M808.9,283.5 L796.7,310" fill="none" stroke="#d9dfde" stroke-width="4.1" stroke-linecap="round" stroke-linejoin="round"/>
<path d="M808.9,283.5 L796.7,310" fill="none" stroke="#fbfcfc" stroke-width="2.5" stroke-linecap="round" stroke-linejoin="round"/>
<path d="M696.9,251 L735.6,265.2 L747.8,281.5 L758,284.5" fill="none" stroke="#d9dfde" stroke-width="4.1" stroke-linecap="round" stroke-linejoin="round"/>
<path d="M696.9,251 L735.6,265.2 L747.8,281.5 L758,284.5" fill="none" stroke="#fbfcfc" stroke-width="2.5" stroke-linecap="round" stroke-linejoin="round"/>
<path d="M737.6,267.2 L737.6,283.5" fill="none" stroke="#d9dfde" stroke-width="4.1" stroke-linecap="round" stroke-linejoin="round"/>
<path d="M737.6,267.2 L737.6,283.5" fill="none" stroke="#fbfcfc" stroke-width="2.5" stroke-linecap="round" stroke-linejoin="round"/>
<rect x="709" y="229.5" width="6" height="8" fill="#d9dfde"/>
<rect x="703" y="241.8" width="5" height="5" fill="#d9dfde"/>
<rect x="702" y="268.2" width="33.6" height="10.2" fill="#d9dfde"/>
<rect x="686.7" y="292.7" width="30.5" height="9.2" fill="#d9dfde"/>
<rect x="722.3" y="290.6" width="29.5" height="11.2" fill="#d9dfde"/>
<rect x="757" y="293.7" width="19.4" height="8.1" fill="#d9dfde"/>
<path d="M610,330 L640,345 L660,368 L640,421" fill="none" stroke="#d9dfde" stroke-width="4.6" stroke-linecap="round" stroke-linejoin="round"/>
<path d="M610,330 L640,345 L660,368 L640,421" fill="none" stroke="#fbfcfc" stroke-width="3" stroke-linecap="round" stroke-linejoin="round"/>
<path d="M590,370 L600,420 L640,447" fill="none" stroke="#d9dfde" stroke-width="4.6" stroke-linecap="round" stroke-linejoin="round"/>
<path d="M590,370 L600,420 L640,447" fill="none" stroke="#fbfcfc" stroke-width="3" stroke-linecap="round" stroke-linejoin="round"/>
<path d="M640,345 L700,380" fill="none" stroke="#d9dfde" stroke-width="3.6" stroke-linecap="round" stroke-linejoin="round"/>
<path d="M640,345 L700,380" fill="none" stroke="#fbfcfc" stroke-width="2" stroke-linecap="round" stroke-linejoin="round"/>
<path d="M515,191 L550,207" stroke="#d9dfde" stroke-width="9"/>
<rect x="498" y="224" width="55" height="14" fill="#d9dfde"/>
<rect x="480" y="250" width="40" height="9" fill="#d9dfde"/>
<rect x="546" y="252" width="34" height="10" fill="#d9dfde"/>
<path d="M574,225 L620,248" stroke="#d9dfde" stroke-width="11"/>
<path d="M627,250 L662,270" stroke="#d9dfde" stroke-width="10"/>
<rect x="472" y="277" width="40" height="9" fill="#d9dfde"/>
<rect x="546" y="281" width="41" height="10" fill="#d9dfde"/>
<path d="M616,274 L636,284" stroke="#d9dfde" stroke-width="8"/>
<path d="M622,287 L668,307" stroke="#d9dfde" stroke-width="10"/>
<rect x="483" y="299" width="33" height="12" fill="#d9dfde"/>
<rect x="530" y="305" width="30" height="10" fill="#d9dfde"/>
<rect x="582" y="312" width="12" height="14" fill="#d9dfde"/>
<rect x="598" y="322" width="11" height="12" fill="#d9dfde"/>
<path d="M453,302 L473,310" stroke="#d9dfde" stroke-width="9"/>
<path d="M446,328 L480,346" stroke="#d9dfde" stroke-width="11"/>
<rect x="483.7" y="323" width="32" height="11" fill="#d9dfde"/>
<rect x="527" y="324" width="48" height="12" fill="#d9dfde"/>
<rect x="488" y="351" width="33" height="10" fill="#d9dfde"/>
<path d="M578,337 L625,353" stroke="#d9dfde" stroke-width="12"/>
<rect x="536" y="349" width="36" height="11" fill="#d9dfde"/>
<path d="M527,372 L550,384" stroke="#d9dfde" stroke-width="11"/>
<path d="M556,390 L597,413" stroke="#d9dfde" stroke-width="14"/>
<path d="M640,435 L675,453" stroke="#d9dfde" stroke-width="13"/>
<rect x="663" y="405.5" width="37" height="12" fill="#d9dfde"/>
<path d="M448.3,316.2 L471.9,330.4 L500.2,343" fill="none" stroke="#d9dfde" stroke-width="4.1" stroke-linecap="round" stroke-linejoin="round"/>
<path d="M448.3,316.2 L471.9,330.4 L500.2,343" fill="none" stroke="#fbfcfc" stroke-width="2.5" stroke-linecap="round" stroke-linejoin="round"/>
<polygon points="628,345 668,339 669,387 632,394" fill="#dde3e2"/>
<rect x="688.6" y="315.8" width="30" height="10.5" fill="#d9dfde"/>
<rect x="724" y="317" width="37" height="8" fill="#d9dfde"/>
<rect x="808" y="329" width="31.5" height="8" fill="#d9dfde"/>
<rect x="821" y="344.7" width="39.4" height="15.8" fill="#d9dfde"/>
<rect x="688.6" y="342" width="31.5" height="9.2" fill="#d9dfde"/>
<rect x="732" y="342" width="31.5" height="7.9" fill="#d9dfde"/>
<rect x="682" y="361.8" width="22.4" height="11.8" fill="#d9dfde"/>
<rect x="713.6" y="360.5" width="23.7" height="11.8" fill="#d9dfde"/>
<rect x="768.8" y="360.5" width="39.4" height="13" fill="#d9dfde"/>
<rect x="824" y="373.6" width="39.4" height="10.5" fill="#d9dfde"/>
<rect x="673.3" y="383" width="28.9" height="10.4" fill="#d9dfde"/>
<rect x="707.4" y="383.7" width="13.3" height="12.6" fill="#d9dfde"/>
<rect x="724.4" y="383" width="13.3" height="12.6" fill="#d9dfde"/>
<rect x="743.7" y="385.2" width="29.6" height="15.6" fill="#d9dfde"/>
<rect x="826.7" y="400" width="34" height="10.5" fill="#d9dfde"/>
<rect x="663.7" y="405.2" width="37" height="11.9" fill="#d9dfde"/>
<rect x="708" y="414.8" width="29.6" height="15.6" fill="#d9dfde"/>
<rect x="741.5" y="415.6" width="31.1" height="13.3" fill="#d9dfde"/>
<rect x="690.4" y="433.3" width="25.9" height="20.7" fill="#d9dfde"/>
<rect x="720" y="443" width="40" height="11.1" fill="#d9dfde"/>
<rect x="763" y="433.3" width="26.7" height="19.3" fill="#d9dfde"/>
<rect x="730.4" y="468.9" width="45.2" height="13.3" fill="#d9dfde"/>
<rect x="776.3" y="399.3" width="17.8" height="19.3" fill="#d9dfde"/>
<rect x="811" y="421" width="34" height="13" fill="#d9dfde"/>
<rect x="783" y="468" width="22" height="14" fill="#d9dfde"/>
<path d="M770,332 L795,350" stroke="#d9dfde" stroke-width="12"/>
<path d="M682,462 L720,483" stroke="#d9dfde" stroke-width="12"/>
<path d="M717,237 L732,245" stroke="#d9dfde" stroke-width="8"/>
<path d="M740,250 L770,267" stroke="#d9dfde" stroke-width="9"/>
<path d="M778,270 L808,287" stroke="#d9dfde" stroke-width="10"/>
<path d="M810,289 L850,311" stroke="#d9dfde" stroke-width="9"/>
<path d="M855,316 L875,327" stroke="#d9dfde" stroke-width="8"/>
<text x="459" y="106" font-size="6.5" fill="#9da1a0" text-anchor="middle" dominant-baseline="central">督察大队</text>
<text x="443" y="248" font-size="6.5" fill="#9da1a0" text-anchor="middle" dominant-baseline="central">环境卫生管理</text>
<text x="921" y="198" font-size="5.5" fill="#9da1a0" text-anchor="middle" dominant-baseline="central">中</text>
<text x="921" y="205" font-size="5.5" fill="#9da1a0" text-anchor="middle" dominant-baseline="central">广</text>
<text x="446" y="388" font-size="6.5" fill="#9da1a0" text-anchor="middle" dominant-baseline="central">A ONE大厦</text>
<text x="603" y="461" font-size="6.5" fill="#9da1a0" text-anchor="middle" dominant-baseline="central">万客写字楼</text>
<text x="614" y="471" font-size="6.5" fill="#9da1a0" text-anchor="middle" dominant-baseline="central">馨德艺苑</text>
<text x="614" y="479" font-size="6.5" fill="#9da1a0" text-anchor="middle" dominant-baseline="central">培训中心</text>
<text x="898" y="433" font-size="6.5" fill="#9da1a0" text-anchor="middle" dominant-baseline="central">24号楼</text>
<text x="686" y="224" font-size="6.5" fill="#9da1a0" text-anchor="middle" dominant-baseline="central">朝来绿色家园</text>
<text x="541" y="196" font-size="6.5" fill="#9da1a0" text-anchor="middle" dominant-baseline="central">3号楼</text>
<text x="594" y="226" font-size="6.5" fill="#9da1a0" text-anchor="middle" dominant-baseline="central">2号楼</text>
<text x="527" y="257" font-size="6.5" fill="#9da1a0" text-anchor="middle" dominant-baseline="central">5号楼</text>
<text x="580" y="261" font-size="6.5" fill="#9da1a0" text-anchor="middle" dominant-baseline="central">6号楼</text>
<text x="612" y="275" font-size="6.5" fill="#9da1a0" text-anchor="middle" dominant-baseline="central">7号楼</text>
<text x="513" y="276" font-size="6.5" fill="#9da1a0" text-anchor="middle" dominant-baseline="central">9号楼</text>
<text x="541" y="299" font-size="6.5" fill="#9da1a0" text-anchor="middle" dominant-baseline="central">20号楼</text>
<text x="469" y="312" font-size="6.5" fill="#9da1a0" text-anchor="middle" dominant-baseline="central">12号楼</text>
<text x="551" y="327" font-size="6.5" fill="#9da1a0" text-anchor="middle" dominant-baseline="central">22号楼</text>
<text x="588" y="361" font-size="6.5" fill="#9da1a0" text-anchor="middle" dominant-baseline="central">23号楼</text>
<text x="617" y="334" font-size="6.5" fill="#9da1a0" text-anchor="middle" dominant-baseline="central">27号楼</text>
<text x="719.3" y="274.4" font-size="6.5" fill="#9da1a0" text-anchor="middle" dominant-baseline="central">51号楼</text>
<text x="736.6" y="297.4" font-size="6.5" fill="#9da1a0" text-anchor="middle" dominant-baseline="central">50号楼</text>
<text x="703" y="314" font-size="6.5" fill="#9da1a0" text-anchor="middle" dominant-baseline="central">52号楼</text>
<text x="833" y="307" font-size="6.5" fill="#9da1a0" text-anchor="middle" dominant-baseline="central">43号楼</text>
<text x="871" y="328" font-size="6.5" fill="#9da1a0" text-anchor="middle" dominant-baseline="central">42号楼</text>
<text x="779" y="333" font-size="6.5" fill="#9da1a0" text-anchor="middle" dominant-baseline="central">65号楼</text>
<text x="698" y="347" font-size="6.5" fill="#9da1a0" text-anchor="middle" dominant-baseline="central">55号楼</text>
<text x="838" y="354" font-size="6.5" fill="#9da1a0" text-anchor="middle" dominant-baseline="central">40号楼</text>
<text x="750" y="368" font-size="6.5" fill="#9da1a0" text-anchor="middle" dominant-baseline="central">61号楼</text>
<text x="849" y="381" font-size="6.5" fill="#9da1a0" text-anchor="middle" dominant-baseline="central">39号楼</text>
<text x="683" y="391" font-size="6.5" fill="#9da1a0" text-anchor="middle" dominant-baseline="central">57号楼</text>
<text x="745" y="391" font-size="6.5" fill="#9da1a0" text-anchor="middle" dominant-baseline="central">72号楼</text>
<text x="842" y="403" font-size="6.5" fill="#9da1a0" text-anchor="middle" dominant-baseline="central">38号楼</text>
<text x="783" y="410" font-size="6.5" fill="#9da1a0" text-anchor="middle" dominant-baseline="central">61号楼</text>
<text x="715" y="422" font-size="6.5" fill="#9da1a0" text-anchor="middle" dominant-baseline="central">58号楼</text>
<text x="835" y="430" font-size="6.5" fill="#9da1a0" text-anchor="middle" dominant-baseline="central">37号楼</text>
<text x="744" y="451" font-size="6.5" fill="#9da1a0" text-anchor="middle" dominant-baseline="central">59号楼</text>
<text x="797" y="474" font-size="6.5" fill="#9da1a0" text-anchor="middle" dominant-baseline="central">37号楼</text>
<text x="669" y="367" font-size="8.5" fill="#7f8483" text-anchor="middle" dominant-baseline="central">时代庄园</text>
<line x1="528" y1="145.8" x2="653" y2="244.8" stroke="#14bb67" stroke-width="1.3"/>
<line x1="560" y1="212.4" x2="653" y2="241.9" stroke="#14bb67" stroke-width="1.3"/>
<line x1="555" y1="208.7" x2="493" y2="240" stroke="#14bb67" stroke-width="1.3"/>
<line x1="495" y1="241.5" x2="587" y2="255" stroke="#14bb67" stroke-width="1.3"/>
<line x1="585" y1="257" x2="592" y2="294" stroke="#14bb67" stroke-width="1.3"/>
<line x1="525" y1="286.6" x2="595" y2="297.2" stroke="#14bb67" stroke-width="1.3"/>
<line x1="519.5" y1="287" x2="504" y2="340" stroke="#14bb67" stroke-width="1.3"/>
<line x1="507" y1="341.4" x2="562" y2="376" stroke="#14bb67" stroke-width="1.3"/>
<line x1="563" y1="378.7" x2="677" y2="427.7" stroke="#14bb67" stroke-width="1.3"/>
<line x1="635" y1="404.4" x2="677" y2="428" stroke="#14bb67" stroke-width="1.3"/>
<line x1="631.5" y1="337" x2="631.5" y2="402" stroke="#14bb67" stroke-width="1.3"/>
<line x1="633" y1="335" x2="680" y2="302.3" stroke="#14bb67" stroke-width="1.3"/>
<line x1="680" y1="303.4" x2="768" y2="302.8" stroke="#14bb67" stroke-width="1.3"/>
<line x1="767" y1="305" x2="734" y2="357.4" stroke="#14bb67" stroke-width="1.3"/>
<line x1="736" y1="361.2" x2="789" y2="391.6" stroke="#14bb67" stroke-width="1.3"/>
<line x1="785" y1="387" x2="796" y2="440" stroke="#14bb67" stroke-width="1.3"/>
<g transform="translate(523,138)"><rect x="0" y="0" width="34" height="12" rx="2.6" fill="#13c06b"/><path d="M5,9.3 C3.6,7.6 2.8,6.5 2.8,5.2 A2.2,2.2 0 0 1 7.2,5.2 C7.2,6.5 6.4,7.6 5,9.3 Z" fill="#fff"/><circle cx="5" cy="5.2" r=".9" fill="#13c06b"/><text x="9.8" y="6.2" font-size="4.7" font-weight="bold" fill="#fff" dominant-baseline="central">B栋负一...</text></g>
<g transform="translate(548.7,203.3)"><rect x="0" y="0" width="34" height="12" rx="2.6" fill="#13c06b"/><path d="M5,9.3 C3.6,7.6 2.8,6.5 2.8,5.2 A2.2,2.2 0 0 1 7.2,5.2 C7.2,6.5 6.4,7.6 5,9.3 Z" fill="#fff"/><circle cx="5" cy="5.2" r=".9" fill="#13c06b"/><text x="9.8" y="6.2" font-size="4.7" font-weight="bold" fill="#fff" dominant-baseline="central">B栋负一...</text></g>
<g transform="translate(485.4,234.8)"><rect x="0" y="0" width="34" height="12" rx="2.6" fill="#13c06b"/><path d="M5,9.3 C3.6,7.6 2.8,6.5 2.8,5.2 A2.2,2.2 0 0 1 7.2,5.2 C7.2,6.5 6.4,7.6 5,9.3 Z" fill="#fff"/><circle cx="5" cy="5.2" r=".9" fill="#13c06b"/><text x="9.8" y="6.2" font-size="4.7" font-weight="bold" fill="#fff" dominant-baseline="central">B栋负一...</text></g>
<g transform="translate(579.6,250.2)"><rect x="0" y="0" width="34" height="12" rx="2.6" fill="#13c06b"/><path d="M5,9.3 C3.6,7.6 2.8,6.5 2.8,5.2 A2.2,2.2 0 0 1 7.2,5.2 C7.2,6.5 6.4,7.6 5,9.3 Z" fill="#fff"/><circle cx="5" cy="5.2" r=".9" fill="#13c06b"/><text x="9.8" y="6.2" font-size="4.7" font-weight="bold" fill="#fff" dominant-baseline="central">B栋负一...</text></g>
<g transform="translate(646.9,236.3)"><rect x="0" y="0" width="34" height="12" rx="2.6" fill="#13c06b"/><path d="M5,9.3 C3.6,7.6 2.8,6.5 2.8,5.2 A2.2,2.2 0 0 1 7.2,5.2 C7.2,6.5 6.4,7.6 5,9.3 Z" fill="#fff"/><circle cx="5" cy="5.2" r=".9" fill="#13c06b"/><text x="9.8" y="6.2" font-size="4.7" font-weight="bold" fill="#fff" dominant-baseline="central">B栋负一...</text></g>
<g transform="translate(516,280.5)"><rect x="0" y="0" width="34" height="12" rx="2.6" fill="#13c06b"/><path d="M5,9.3 C3.6,7.6 2.8,6.5 2.8,5.2 A2.2,2.2 0 0 1 7.2,5.2 C7.2,6.5 6.4,7.6 5,9.3 Z" fill="#fff"/><circle cx="5" cy="5.2" r=".9" fill="#13c06b"/><text x="9.8" y="6.2" font-size="4.7" font-weight="bold" fill="#fff" dominant-baseline="central">B栋负一...</text></g>
<g transform="translate(588.5,290.6)"><rect x="0" y="0" width="34" height="12" rx="2.6" fill="#13c06b"/><path d="M5,9.3 C3.6,7.6 2.8,6.5 2.8,5.2 A2.2,2.2 0 0 1 7.2,5.2 C7.2,6.5 6.4,7.6 5,9.3 Z" fill="#fff"/><circle cx="5" cy="5.2" r=".9" fill="#13c06b"/><text x="9.8" y="6.2" font-size="4.7" font-weight="bold" fill="#fff" dominant-baseline="central">B栋负一...</text></g>
<g transform="translate(501.2,334.2)"><rect x="0" y="0" width="34" height="12" rx="2.6" fill="#13c06b"/><path d="M5,9.3 C3.6,7.6 2.8,6.5 2.8,5.2 A2.2,2.2 0 0 1 7.2,5.2 C7.2,6.5 6.4,7.6 5,9.3 Z" fill="#fff"/><circle cx="5" cy="5.2" r=".9" fill="#13c06b"/><text x="9.8" y="6.2" font-size="4.7" font-weight="bold" fill="#fff" dominant-baseline="central">B栋负一...</text></g>
<g transform="translate(673,299.2)"><rect x="0" y="0" width="34" height="12" rx="2.6" fill="#13c06b"/><path d="M5,9.3 C3.6,7.6 2.8,6.5 2.8,5.2 A2.2,2.2 0 0 1 7.2,5.2 C7.2,6.5 6.4,7.6 5,9.3 Z" fill="#fff"/><circle cx="5" cy="5.2" r=".9" fill="#13c06b"/><text x="9.8" y="6.2" font-size="4.7" font-weight="bold" fill="#fff" dominant-baseline="central">B栋负一...</text></g>
<g transform="translate(761.9,298.6)"><rect x="0" y="0" width="34" height="12" rx="2.6" fill="#13c06b"/><path d="M5,9.3 C3.6,7.6 2.8,6.5 2.8,5.2 A2.2,2.2 0 0 1 7.2,5.2 C7.2,6.5 6.4,7.6 5,9.3 Z" fill="#fff"/><circle cx="5" cy="5.2" r=".9" fill="#13c06b"/><text x="9.8" y="6.2" font-size="4.7" font-weight="bold" fill="#fff" dominant-baseline="central">B栋负一...</text></g>
<g transform="translate(628.7,331.2)"><rect x="0" y="0" width="34" height="12" rx="2.6" fill="#13c06b"/><path d="M5,9.3 C3.6,7.6 2.8,6.5 2.8,5.2 A2.2,2.2 0 0 1 7.2,5.2 C7.2,6.5 6.4,7.6 5,9.3 Z" fill="#fff"/><circle cx="5" cy="5.2" r=".9" fill="#13c06b"/><text x="9.8" y="6.2" font-size="4.7" font-weight="bold" fill="#fff" dominant-baseline="central">B栋负一...</text></g>
<g transform="translate(555,371.8)"><rect x="0" y="0" width="34" height="12" rx="2.6" fill="#13c06b"/><path d="M5,9.3 C3.6,7.6 2.8,6.5 2.8,5.2 A2.2,2.2 0 0 1 7.2,5.2 C7.2,6.5 6.4,7.6 5,9.3 Z" fill="#fff"/><circle cx="5" cy="5.2" r=".9" fill="#13c06b"/><text x="9.8" y="6.2" font-size="4.7" font-weight="bold" fill="#fff" dominant-baseline="central">B栋负一...</text></g>
<g transform="translate(730.5,354.5)"><rect x="0" y="0" width="34" height="12" rx="2.6" fill="#13c06b"/><path d="M5,9.3 C3.6,7.6 2.8,6.5 2.8,5.2 A2.2,2.2 0 0 1 7.2,5.2 C7.2,6.5 6.4,7.6 5,9.3 Z" fill="#fff"/><circle cx="5" cy="5.2" r=".9" fill="#13c06b"/><text x="9.8" y="6.2" font-size="4.7" font-weight="bold" fill="#fff" dominant-baseline="central">B栋负一...</text></g>
<g transform="translate(782,383.4)"><rect x="0" y="0" width="34" height="12" rx="2.6" fill="#13c06b"/><path d="M5,9.3 C3.6,7.6 2.8,6.5 2.8,5.2 A2.2,2.2 0 0 1 7.2,5.2 C7.2,6.5 6.4,7.6 5,9.3 Z" fill="#fff"/><circle cx="5" cy="5.2" r=".9" fill="#13c06b"/><text x="9.8" y="6.2" font-size="4.7" font-weight="bold" fill="#fff" dominant-baseline="central">B栋负一...</text></g>
<g transform="translate(628.7,396.8)"><rect x="0" y="0" width="34" height="12" rx="2.6" fill="#13c06b"/><path d="M5,9.3 C3.6,7.6 2.8,6.5 2.8,5.2 A2.2,2.2 0 0 1 7.2,5.2 C7.2,6.5 6.4,7.6 5,9.3 Z" fill="#fff"/><circle cx="5" cy="5.2" r=".9" fill="#13c06b"/><text x="9.8" y="6.2" font-size="4.7" font-weight="bold" fill="#fff" dominant-baseline="central">B栋负一...</text></g>
<g transform="translate(669.8,421.3)"><rect x="0" y="0" width="34" height="12" rx="2.6" fill="#13c06b"/><path d="M5,9.3 C3.6,7.6 2.8,6.5 2.8,5.2 A2.2,2.2 0 0 1 7.2,5.2 C7.2,6.5 6.4,7.6 5,9.3 Z" fill="#fff"/><circle cx="5" cy="5.2" r=".9" fill="#13c06b"/><text x="9.8" y="6.2" font-size="4.7" font-weight="bold" fill="#fff" dominant-baseline="central">B栋负一...</text></g>
<g transform="translate(791.2,433.6)"><rect x="0" y="0" width="34" height="12" rx="2.6" fill="#13c06b"/><path d="M5,9.3 C3.6,7.6 2.8,6.5 2.8,5.2 A2.2,2.2 0 0 1 7.2,5.2 C7.2,6.5 6.4,7.6 5,9.3 Z" fill="#fff"/><circle cx="5" cy="5.2" r=".9" fill="#13c06b"/><text x="9.8" y="6.2" font-size="4.7" font-weight="bold" fill="#fff" dominant-baseline="central">B栋负一...</text></g>
<g transform="translate(378,318)"><rect x="-7.5" y="-4" width="15" height="7" rx="3.5" fill="#fff" stroke="#ccc" stroke-width=".5"/><circle cx="-4" cy="-0.5" r="1.7" fill="#ef4b4b"/><circle cx="0" cy="-0.5" r="1.7" fill="#f5b82e"/><circle cx="4" cy="-0.5" r="1.7" fill="#34c25c"/><rect x="-0.6" y="3" width="1.2" height="3.5" fill="#555"/></g>
<g transform="translate(598,439.6)"><rect x="-7.5" y="-4" width="15" height="7" rx="3.5" fill="#fff" stroke="#ccc" stroke-width=".5"/><circle cx="-4" cy="-0.5" r="1.7" fill="#ef4b4b"/><circle cx="0" cy="-0.5" r="1.7" fill="#f5b82e"/><circle cx="4" cy="-0.5" r="1.7" fill="#34c25c"/><rect x="-0.6" y="3" width="1.2" height="3.5" fill="#555"/></g>
<circle cx="661" cy="106.5" r="3.8" fill="#4b7be6"/>
<text x="787" y="149.3" font-size="37.2" font-weight="900" fill="#14c46b" stroke="#111c15" stroke-width="4.4" stroke-linejoin="round" text-anchor="middle" dominant-baseline="central" textLength="229" lengthAdjust="spacing">巡更路线预览</text>
<text x="787" y="149.3" font-size="37.2" font-weight="900" fill="#14c46b" stroke="#14c46b" stroke-width=".8" stroke-linejoin="round" text-anchor="middle" dominant-baseline="central" textLength="229" lengthAdjust="spacing">巡更路线预览</text>
<rect x="796.3" y="447.9" width="123.7" height="28.7" rx="3" fill="#3d3d3d" fill-opacity="0.96"/>
<text x="803" y="456.3" font-size="5.8" fill="#f2f2f2" dominant-baseline="central" textLength="83" lengthAdjust="spacing">巡更点名称：B栋负一机房检查点</text>
<text x="803" y="468.6" font-size="5.8" fill="#f2f2f2" dominant-baseline="central" textLength="100.5" lengthAdjust="spacing">巡更点坐标：(116.404177,39.909652)</text>
</svg>
</div>

</body></html>
